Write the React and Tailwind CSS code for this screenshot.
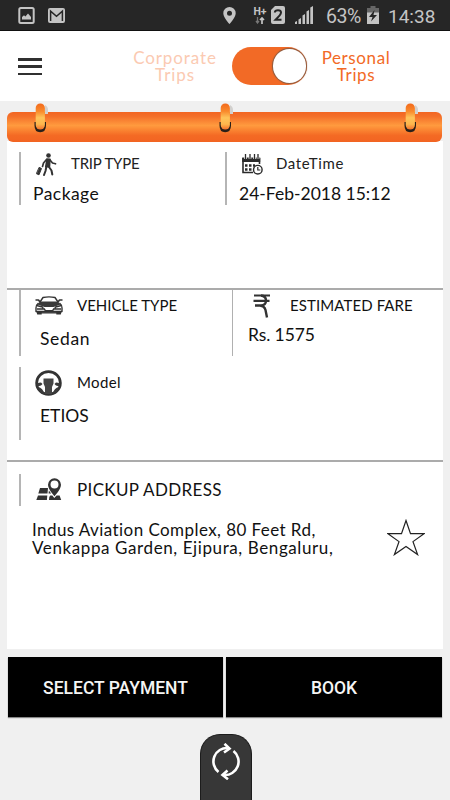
import { useState } from "react";
import clsx from "clsx";

function StatusBar() {
  return (
    <div className="h-[31px] bg-[#262626] border-b border-[#111] flex items-center text-[#c4c4c4] font-['Roboto',sans-serif]">
      <svg className="ml-[18px] w-[17px] h-[17px] mt-px" viewBox="0 0 17 17">
        <rect x="1.3" y="1" width="14.4" height="15" rx="1.5" fill="none" stroke="currentColor" strokeWidth="2" />
        <path d="M4 12.5V10l2-1.8 1.4 1.3L10 6.5l3 3.5v2.5z" fill="currentColor" />
      </svg>
      <svg className="ml-[13px] w-[17px] h-[15px] mt-px" viewBox="0 0 17 15">
        <rect width="17" height="15" rx="2" fill="currentColor" />
        <path d="M2.600 13V3.200l5.900 5 5.900-5V13" fill="none" stroke="#262626" strokeWidth="1.500" />
      </svg>
      <svg className="ml-[158px] w-[13px] h-[17px]" viewBox="0 0 13 17">
        <path fillRule="evenodd" d="M6.5 0A6.2 6.2 0 0 0 .3 6.2C.3 10.5 6.5 17 6.5 17s6.200-6.500 6.200-10.800A6.200 6.200 0 0 0 6.500 0zm0 3.800a2.500 2.500 0 1 1 0 5 2.500 2.500 0 0 1 0-5z" fill="currentColor" />
      </svg>
      <div className="ml-[17px] w-[14px] flex flex-col items-center">
        <span className="text-[10.500px] leading-[10px] font-bold whitespace-nowrap">H+</span>
        <svg className="w-[10px] h-[7px]" viewBox="0 0 10 7">
          <path d="M2.500 0v5M1 4l1.500 2L4 4" fill="none" stroke="#777" strokeWidth="1.300" />
          <path d="M7 7V1M5 3l2-2 2 2" fill="none" stroke="currentColor" strokeWidth="1.700" />
        </svg>
      </div>
      <svg className="ml-[4px] w-[14px] h-[18px]" viewBox="0 0 14 18">
        <path d="M4 0h8q2 0 2 2v14q0 2-2 2H2q-2 0-2-2V4z" fill="currentColor" />
        <path d="M3.800 6.500Q4 4.200 7 4.200q3 0 3 2.400 0 1.400-1.500 3L4.500 13.800H10.500" fill="none" stroke="#262626" strokeWidth="2" />
      </svg>
      <svg className="ml-[10px] w-[18px] h-[18px]" viewBox="0 0 18 18">
        <path d="M0 18v-2l2-1v3zM3.500 18v-4.500l2.500-1.500v6zM7.500 18V9.500L10 8v10zM11.500 18V5.500L14 4v14zM15.300 18V1.500L18 0v18z" fill="currentColor" />
      </svg>
      <span className="ml-[13px] w-[37px] text-[19.500px] leading-[22px] tracking-[-0.500px] mt-[3px]">63%</span>
      <svg className="ml-[4px] w-[12px] h-[18px]" viewBox="0 0 12 18">
        <path d="M3.500 0h5v2H12v5H0V2h3.500z" fill="#666" />
        <path d="M0 6.500h12V18H0z" fill="currentColor" />
        <path d="M7.500 4L2 11h3.500L4 15.500 10 9H6.500z" fill="#262626" />
      </svg>
      <span className="ml-[9px] text-[19px] leading-[22px] mt-[3px]">14:38</span>
    </div>
  );
}

function Header() {
  const [personal, setPersonal] = useState(true);

  return (
    <header className="h-[70px] bg-white flex items-start">
      <button type="button" className="ml-[18px] mt-[27px] w-6 h-[17px] flex flex-col justify-between">
        <span className="block w-6 h-[2.500px] bg-[#303030]" />
        <span className="block w-6 h-[2.500px] bg-[#303030]" />
        <span className="block w-6 h-[2.500px] bg-[#303030]" />
      </button>
      <div className={clsx("ml-[86px] mt-[18px] w-[94px] text-center text-[17px] leading-[17px] tracking-[0.900px]", personal ? "text-[#fbcab2]" : "text-[#f26a26]")}>
        Corporate
        <br />
        Trips
      </div>
      <button
        type="button"
        onClick={() => setPersonal(!personal)}
        className={clsx("ml-[10px] mt-4 w-[75px] h-[38px] rounded-full bg-[#f26a26] p-[1px] flex", personal ? "justify-end" : "justify-start")}
      >
        <span className="block w-[33px] h-[34px] mt-px rounded-full bg-white shadow-[0_0_1px_1px_#8a5a40]" />
      </button>
      <div className={clsx("ml-[9px] mt-[18px] w-[80px] text-center text-[17px] leading-[17px] tracking-[0.600px]", personal ? "text-[#f26a26]" : "text-[#fbcab2]")}>
        Personal
        <br />
        Trips
      </div>
    </header>
  );
}

function Ring() {
  return (
    <svg className="w-[20px] h-[30px]" viewBox="0 0 20 30">
      <defs>
        <linearGradient id="ring" x1="0" y1="0" x2="0" y2="1">
          <stop offset="0" stopColor="#f36a1c" />
          <stop offset="0.300" stopColor="#f98a2c" />
          <stop offset="0.550" stopColor="#fec45a" />
          <stop offset="0.800" stopColor="#fdb54c" />
          <stop offset="1" stopColor="#f4702a" />
        </linearGradient>
      </defs>
      <path d="M11 2q3 1.500 3 5v4h-3z" fill="#d2d0ce" />
      <path d="M0.500 19v3.500q0 6.700 5.700 6.700t5.800-6.700V19z" fill="#2a2019" />
      <rect x="1.700" y="0.500" width="9.200" height="26" rx="4.500" fill="url(#ring)" />
    </svg>
  );
}

function CalendarBar() {
  return (
    <div className="mx-[7px] h-[40px] w-[435px] pt-[11px] relative">
      <div className="h-[30px] rounded-[6px] bg-[linear-gradient(to_bottom,#f26522_0%,#f4702a_15%,#ff9a3e_45%,#fc8c36_55%,#f46a24_78%,#f26422_100%)]" />
      <div className="absolute left-[27px] right-[18px] top-[2px] flex justify-between">
        <Ring />
        <Ring />
        <Ring />
      </div>
    </div>
  );
}

function WalkIcon() {
  return (
    <svg className="w-[21px] h-[23px]" viewBox="0 0 21 23" fill="none" stroke="#333" strokeWidth="2" strokeLinecap="round" strokeLinejoin="round">
      <circle cx="12.500" cy="2.500" r="2.300" fill="#333" stroke="none" />
      <path d="M11 6l3 .3-.5 7.500h-3.800z" fill="#333" strokeWidth="1.500" />
      <path d="M10.500 6.500L7.500 10l-1 3.500M14 7l2.500 3 3 .8" strokeWidth="1.700" />
      <path d="M10.300 14l-.8 4-1.500 4M13 14l2.500 3.500.8 4" />
      <path d="M3.500 14.500l2 1-2.500 6.300-2.300-1z" fill="#333" strokeWidth="1" />
    </svg>
  );
}

function DateIcon() {
  return (
    <svg className="w-[22px] h-[21px]" viewBox="0 0 22 21" fill="none" stroke="#2b2b2b">
      <path d="M2 4v14.500h10M18.500 4v6" strokeWidth="1.600" />
      <path d="M1.200 3.500h18v4.500h-18z" fill="#2b2b2b" stroke="none" />
      <path d="M4.500 0v5M9 0v5M13.500 0v5M17 0v5" strokeWidth="2.600" stroke="#fff" />
      <path d="M4.500 0v5M9 0v5M13.500 0v5M17 0v5" strokeWidth="1.300" />
      <path d="M4 11.500h2.500M8 11.500h2.500M12 11.500h2M4 15.500h2.500M8 15.500h2.500" strokeWidth="2.300" />
      <circle cx="16.800" cy="15.700" r="4.300" strokeWidth="1.400" fill="#fff" />
      <path d="M16.800 13v3h2.500" strokeWidth="1.200" />
    </svg>
  );
}

function CarIcon() {
  return (
    <svg className="w-[28px] h-[19px]" viewBox="0 0 28 19" fill="none" stroke="#333" strokeWidth="1.400" strokeLinejoin="round">
      <path d="M5 6L8 1.500Q14 .2 20 1.500L23 6" />
      <path d="M5 5.500h18l2.500 3-7 2.500h-9l-7-2.500z" fill="#3a3a3a" stroke="none" />
      <path d="M.5 4h3l1.500 2M27.500 4h-3L23 6" strokeWidth="1.600" />
      <path d="M3.500 7Q1 9 1 12v3.500h26V12q0-3-2.500-5" />
      <path d="M1.500 9.500l6 1.500.8 2H2M26.500 9.500l-6 1.500-.8 2H26M9 12.500l1.500 2.300h7l1.500-2.300" />
      <path d="M1.200 15h5.500v3.500H2.200zM26.800 15h-5.500v3.500h4.500z" fill="#333" stroke="none" />
      <path d="M6 16.800h16" />
    </svg>
  );
}

function RupeeIcon() {
  return (
    <svg className="w-[18px] h-[24px]" viewBox="0 0 18 24" fill="none" stroke="#333" strokeWidth="2.200">
      <path d="M1 1.500h16M.5 6.800h16" />
      <path d="M8 1.500q5 .5 5 5 0 5-5 5H2M7 11.500q4.500.5 5.500 4.500l1.500 7.500" strokeWidth="2.400" />
    </svg>
  );
}

function WheelIcon() {
  return (
    <svg className="w-[27px] h-[26px]" viewBox="0 0 27 26">
      <ellipse cx="13.500" cy="13" rx="11.900" ry="11.400" fill="none" stroke="#333" strokeWidth="2.700" />
      <path d="M2 13l4-.5 1.500 1.500L6 15.500l-3.500 1zM25 13l-4-.5-1.500 1.500 1.500 1.500 3.500 1z" fill="#3a3a3a" />
      <path d="M3 17q5 .5 6.500 7.500L5 22zM24 17q-5 .5-6.500 7.500L22 22z" fill="#3a3a3a" />
      <path d="M8.500 8.500h10v5l-1.500 3.500v7h-7v-7l-1.500-3.500z" fill="#444" />
    </svg>
  );
}

function MapIcon() {
  return (
    <svg className="w-[26px] h-[24px]" viewBox="0 0 26 24" fill="#333">
      <path d="M4 10h8l-.5 5.500H2.300zM2 17.500h9.300l-.4 4.500H.3zM13.300 19l1-1.500h2l2 2.500 2.300-2.500h3l1.600 4.500H13zM12.600 15.500l.3-3 2.200 3z" />
      <path fillRule="evenodd" d="M18.500.3a6.500 6.500 0 0 0-6.500 6.500c0 4.600 6.500 11.500 6.500 11.500S25 11.400 25 6.800A6.500 6.500 0 0 0 18.500.3zm0 2.300a4 4 0 1 1 0 8 4 4 0 0 1 0-8z" />
    </svg>
  );
}

function StarIcon() {
  return (
    <svg className="w-[38px] h-[37px]" viewBox="0 0 38 37" fill="none" stroke="#222" strokeWidth="1.200">
      <path d="M19 1.500l4.500 13.200H37L26 22.600l4.600 13L19 27.500 7.400 35.600l4.600-13L1 14.700h13.500z" />
    </svg>
  );
}

function TripCard() {
  return (
    <main className="mx-[7px] w-[436px] h-[508px] bg-white text-[#111]">
      <section className="h-[149px] pt-[11px] pl-3 flex border-b-2 border-[#ababab]">
        <div className="w-[206px] h-[53px] border-l-2 border-[#b5b5b5] pl-[12px]">
          <div className="flex h-[32px] items-start">
            <div className="w-[38px] pl-[3px] pt-[1px]"><WalkIcon /></div>
            <span className="mt-px text-[15px] leading-5 tracking-[-0.200px] text-[#222]">TRIP TYPE</span>
          </div>
          <div className="text-[17.500px] leading-5 tracking-[0.450px]">Package</div>
        </div>
        <div className="h-[53px] border-l-2 border-[#b5b5b5] pl-[12px]">
          <div className="flex h-[32px] items-start">
            <div className="w-[37px] pl-[2px] pt-[2px]"><DateIcon /></div>
            <span className="mt-px text-[15px] leading-5 tracking-[0.650px] text-[#222]">DateTime</span>
          </div>
          <div className="text-[17.500px] leading-5">24-Feb-2018 15:12</div>
        </div>
      </section>

      <section className="h-[172px] pl-3 border-b-2 border-[#ababab]">
        <div className="flex">
          <div className="w-[213px] h-[66px] border-l-2 border-[#b5b5b5] pl-[14px]">
            <div className="flex h-[39px] items-start">
              <div className="w-[42px] pt-[6px]"><CarIcon /></div>
              <span className="mt-[5px] text-[15px] leading-5">VEHICLE TYPE</span>
            </div>
            <div className="pl-[5px] text-[17.500px] leading-5 tracking-[0.650px]">Sedan</div>
          </div>
          <div className="h-[66px] border-l-[1.500px] border-[#b0b0b0] pl-[15px]">
            <div className="flex h-[35px] items-start">
              <div className="w-[42px] pl-[5px] pt-[4px]"><RupeeIcon /></div>
              <span className="mt-[5px] text-[15px] leading-5 tracking-[0.100px]">ESTIMATED FARE</span>
            </div>
            <div className="text-[17.500px] leading-5 tracking-[-0.100px]">Rs. 1575</div>
          </div>
        </div>
        <div className="mt-[11px] h-[73px] border-l-2 border-[#b5b5b5] pl-[14px]">
          <div className="flex h-[39px] items-start">
            <div className="w-[42px] pt-[3px]"><WheelIcon /></div>
            <span className="mt-[5px] text-[15px] leading-5 tracking-[0.400px]">Model</span>
          </div>
          <div className="pl-[5px] text-[17.500px] leading-5">ETIOS</div>
        </div>
      </section>

      <section className="pt-[12px] pl-3">
        <div className="h-[32px] border-l-2 border-[#b5b5b5] pl-[15px] flex items-start">
          <div className="w-[41px] pt-[4px]"><MapIcon /></div>
          <span className="mt-[6px] text-[17px] leading-5 tracking-[0.350px]">PICKUP ADDRESS</span>
        </div>
        <div className="mt-[13px] pl-[13px] flex items-start">
          <p className="mt-[2px] w-[355px] text-[17px] leading-[17.500px]">
            <span className="tracking-[0.430px]">Indus Aviation Complex, 80 Feet Rd,</span>
            <br />
            <span className="tracking-[0.600px]">Venkappa Garden, Ejipura, Bengaluru,</span>
          </p>
          <button type="button"><StarIcon /></button>
        </div>
      </section>
    </main>
  );
}

export default function App() {
  return (
    <div className="w-[450px] h-[800px] overflow-hidden flex flex-col bg-[#f0f0f0] font-['Lato','Open_Sans',sans-serif]">
      <StatusBar />
      <Header />
      <CalendarBar />
      <TripCard />
      <div className="mt-2 mx-2 flex gap-[3px] font-['Roboto',sans-serif] font-medium text-[17.500px] text-[#f5f5f5]">
        <button type="button" className="w-[215px] h-[60px] pt-[2px] bg-black shadow-[0_1px_1px_#888]">SELECT PAYMENT</button>
        <button type="button" className="w-[216px] h-[60px] pt-[2px] bg-black shadow-[0_1px_1px_#888]">BOOK</button>
      </div>
      <button type="button" className="mt-[17px] ml-[200px] w-[52px] h-[66px] rounded-t-[20px] bg-[#373737] border border-b-0 border-[#1c1c1c] flex justify-center pt-[8px]">
        <svg className="w-[32px] h-[37px]" viewBox="0 0 32 37" fill="none" stroke="#fff" strokeWidth="2.600">
          <path d="M8.500 29A13.500 13.500 0 0 1 18 5M23.500 8A13.500 13.500 0 0 1 14 32" />
          <path d="M14.500.8L19.500 5.500l-5.500 4M17.500 27.500L12.500 32l5.500 4.200" />
        </svg>
      </button>
    </div>
  );
}
